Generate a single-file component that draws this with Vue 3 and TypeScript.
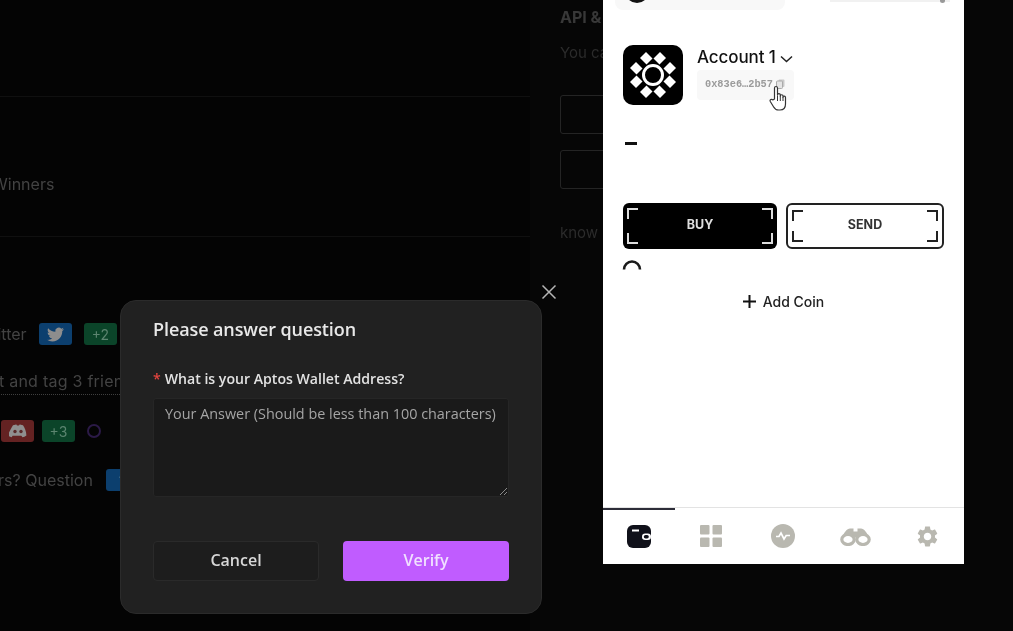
<script setup lang="ts">
const corners = ['tl', 'tr', 'bl', 'br']
const arms = [
  [26.5, 16.5, 20, 10], [33.5, 16.5, 40, 10], [16.5, 26.5, 10, 20], [43.5, 26.5, 50, 20],
  [16.5, 33.5, 10, 40], [43.5, 33.5, 50, 40], [26.5, 43.5, 20, 50], [33.5, 43.5, 40, 50],
]
</script>

<template>
  <div class="stage">
    <section class="page-left">
      <div class="rule first"></div>
      <div class="row winners"><span class="clip-w">Winners</span></div>
      <div class="rule second"></div>
      <div class="row tw">
        <span class="clip-a">Twitter</span>
        <span class="chip blue">
          <svg width="17" height="17" viewBox="0 0 24 24"><path fill="#8d8d8d" d="M23.953 4.57a10 10 0 01-2.825.775 4.958 4.958 0 002.163-2.723c-.951.555-2.005.959-3.127 1.184a4.92 4.92 0 00-8.384 4.482C7.69 8.095 4.067 6.13 1.64 3.162a4.822 4.822 0 00-.666 2.475c0 1.71.87 3.213 2.188 4.096a4.904 4.904 0 01-2.228-.616v.06a4.923 4.923 0 003.946 4.827 4.996 4.996 0 01-2.212.085 4.936 4.936 0 004.604 3.417 9.867 9.867 0 01-6.102 2.105c-.39 0-.779-.023-1.17-.067a13.995 13.995 0 007.557 2.209c9.053 0 13.998-7.496 13.998-13.985 0-.21 0-.42-.015-.63A9.935 9.935 0 0024 4.59z"/></svg>
        </span>
        <span class="chip green">+2</span>
      </div>
      <div class="row tag"><span class="clip-b">Post and tag 3 friends</span></div>
      <div class="row dc">
        <span class="chip red">
          <svg width="18" height="14" viewBox="0 0 18 14"><path fill="#8f8f8f" d="M4 1.2C5.5.6 7 .4 7.4.4L8 1.4h2l.6-1c.4 0 1.9.2 3.4.8 1.6 2.4 3.4 6 3.4 10.2-1.2 1-2.6 1.6-4 1.9l-1-1.6-8.8 0-1 1.6c-1.4-.3-2.8-.9-4-1.9C.6 7.2 2.4 3.6 4 1.2z"/><circle cx="6" cy="7.5" r="1.7" fill="#5a2a2a"/><circle cx="12" cy="7.5" r="1.7" fill="#5a2a2a"/></svg>
        </span>
        <span class="chip green">+3</span>
        <span class="ring"></span>
      </div>
      <div class="row qa">
        <span class="clip-c">Answers? Question</span>
        <span class="chip blue">?</span>
      </div>
    </section>

    <section class="page-right">
      <h2 class="api">API &amp; Keys</h2>
      <p class="hint">You can connect</p>
      <div class="ghost-input"></div>
      <div class="ghost-input"></div>
      <p class="know">know more</p>
    </section>

    <div class="modal">
      <h3>Please answer question</h3>
      <label class="q"><span class="star">*</span>What is your Aptos Wallet Address?</label>
      <div class="area">
        <span>Your Answer (Should be less than 100 characters)</span>
        <svg class="grip" width="9" height="9" viewBox="0 0 9 9"><path d="M1 8 8 1M5 8 8 5" stroke="#8a8a8a" stroke-width="1" fill="none"/></svg>
      </div>
      <div class="actions">
        <button class="cancel">Cancel</button>
        <button class="verify">Verify</button>
      </div>
    </div>

    <svg class="close" width="16" height="16" viewBox="0 0 16 16"><path d="M1.5 1.5 14.5 14.5M14.5 1.5 1.5 14.5" stroke="#b5b5b5" stroke-width="1.5" fill="none"/></svg>

    <aside class="wallet">
      <div class="topbar">
        <div class="pill-left"><span class="dot"></span></div>
        <div class="pill-right"><span class="tick"></span></div>
      </div>

      <div class="account">
        <svg class="avatar" width="60" height="60" viewBox="0 0 60 60">
          <rect width="60" height="60" rx="10" fill="#000"/>
          <line v-for="(a, i) in arms" :key="i" :x1="a[0]" :y1="a[1]" :x2="a[2]" :y2="a[3]" stroke="#fff" stroke-width="8.5"/>
          <circle cx="30" cy="30" r="9.5" fill="none" stroke="#fff" stroke-width="3"/>
        </svg>
        <div class="acc-text">
          <div class="acc-name">Account 1
            <svg width="13" height="8" viewBox="0 0 13 8"><path d="M1 1.5 6.5 6.5 12 1.5" stroke="#222" stroke-width="1.5" fill="none"/></svg>
          </div>
          <div class="addr">
            <span>0x83e6…2b57</span>
            <svg width="9" height="10" viewBox="0 0 9 10"><rect x="2.5" y=".5" width="6" height="7.5" rx="1" fill="#c9c9c9"/><rect x=".5" y="2" width="6" height="7.5" rx="1" fill="#e4e4e4" stroke="#aaa"/></svg>
          </div>
        </div>
      </div>

      <div class="dash"></div>

      <div class="btns">
        <button class="act buy"><i v-for="c in corners" :key="c" :class="['cn', c]"></i>BUY</button>
        <button class="act send"><i v-for="c in corners" :key="c" :class="['cn', c]"></i>SEND</button>
      </div>

      <svg class="spin" width="20" height="12" viewBox="0 0 20 12"><path d="M2 10.5A8 8 0 0 1 18 10.5" fill="none" stroke="#1a1a1a" stroke-width="2.6"/></svg>

      <div class="add">
        <svg width="13" height="13" viewBox="0 0 13 13"><path d="M6.5 0v13M0 6.5h13" stroke="#111" stroke-width="2"/></svg>
        <span>Add Coin</span>
      </div>

      <nav class="tabs">
        <div class="tab active">
          <svg width="24" height="23" viewBox="0 0 24 23"><rect width="24" height="23" rx="6" fill="#10111a"/><path d="M5 5.5h7" stroke="#fff" stroke-width="2"/><rect x="15" y="8.5" width="9" height="6.5" rx="3.2" fill="#fff"/><rect x="16.8" y="10" width="5" height="3.5" rx="1.7" fill="#10111a"/></svg>
        </div>
        <div class="tab">
          <svg width="22" height="22" viewBox="0 0 22 22" fill="#b9b8b0"><rect width="9.5" height="9.5" rx="1"/><rect x="12.5" width="9.5" height="9.5" rx="1"/><rect y="12.5" width="9.5" height="9.5" rx="1"/><rect x="12.5" y="12.5" width="9.5" height="9.5" rx="1"/></svg>
        </div>
        <div class="tab">
          <svg width="24" height="24" viewBox="0 0 24 24"><circle cx="12" cy="12" r="12" fill="#b9b8b0"/><path d="M5 12.5h3l2-3.5 3 6 2.2-3.5H19" stroke="#fff" stroke-width="1.7" fill="none"/></svg>
        </div>
        <div class="tab">
          <svg width="31" height="19" viewBox="0 0 31 19"><path d="M10 1.5h3.5v3h4v-3H21c3 0 6 4 8 9H2c2-5 5-9 8-9z" fill="#b9b8b0"/><ellipse cx="8" cy="12.5" rx="6.2" ry="5" fill="#fff" stroke="#b9b8b0" stroke-width="3.2"/><ellipse cx="23" cy="12.5" rx="6.2" ry="5" fill="#fff" stroke="#b9b8b0" stroke-width="3.2"/></svg>
        </div>
        <div class="tab">
          <svg width="25" height="25" viewBox="0 0 24 24"><path fill="#b9b8b0" d="M19.14 12.94c.04-.3.06-.61.06-.94 0-.32-.02-.64-.07-.94l2.03-1.58c.18-.14.23-.41.12-.61l-1.92-3.32c-.12-.22-.37-.29-.59-.22l-2.39.96c-.5-.38-1.03-.7-1.62-.94l-.36-2.54c-.04-.24-.24-.41-.48-.41h-3.84c-.24 0-.43.17-.47.41l-.36 2.54c-.59.24-1.13.57-1.62.94l-2.39-.96c-.22-.08-.47 0-.59.22L2.74 8.87c-.12.21-.08.47.12.61l2.03 1.58c-.05.3-.09.63-.09.94s.02.64.07.94l-2.03 1.58c-.18.14-.23.41-.12.61l1.92 3.32c.12.22.37.29.59.22l2.39-.96c.5.38 1.03.7 1.62.94l.36 2.54c.05.24.24.41.48.41h3.84c.24 0 .44-.17.47-.41l.36-2.54c.59-.24 1.13-.56 1.62-.94l2.39.96c.22.08.47 0 .59-.22l1.92-3.32c.12-.22.07-.47-.12-.61l-2.01-1.58zM12 15.6c-1.98 0-3.6-1.62-3.6-3.6s1.62-3.6 3.6-3.6 3.6 1.62 3.6 3.6-1.62 3.6-3.6 3.6z"/></svg>
        </div>
      </nav>
    </aside>

    <svg class="hand" width="18" height="26" viewBox="0 0 18 26">
      <path d="M5.5 14V3c0-2 3-2 3 0v7c0-1.8 2.8-1.8 2.8 0v1c0-1.7 2.7-1.7 2.7 0v1.2c0-1.5 2.5-1.5 2.5.2V19c0 3.5-2 6-5.5 6H9.5c-2.5 0-3.8-1.2-5-3.3L1.3 16.5c-.9-1.7 1.3-3 2.5-1.5z" fill="#fff" stroke="#333" stroke-width="1.2" stroke-linejoin="round"/>
      <path d="M8.5 10.500V16M11.300 11V16M14 12V16" stroke="#333" stroke-width="1" fill="none"/>
    </svg>
  </div>
</template>

<style>
html, body { margin: 0; background: #000; }
</style>

<style scoped>
.stage {
  position: relative;
  width: 1013px;
  height: 631px;
  overflow: hidden;
  display: flex;
  background: #000;
  font-family: "Open Sans", "Liberation Sans", sans-serif;
  filter: blur(.45px);
}
.page-left {
  width: 530px;
  height: 631px;
  flex: none;
  overflow: hidden;
  background: #040404;
  padding-top: 96px;
  box-sizing: border-box;
  color: #434343;
  font-family: Inter, "Liberation Sans", sans-serif;
  font-size: 16px;
}
.rule { height: 1px; background: #101010; }
.rule.second { margin-top: 41px; }
.row { display: flex; align-items: center; height: 22px; white-space: nowrap; }
.winners { margin-top: 76px; }
.clip-w { margin-left: -8px; }
.tw { margin-top: 86px; }
.clip-a { margin-left: -25px; width: 64px; flex: none; }
.chip {
  width: 33px;
  height: 22px;
  flex: none;
  border-radius: 3px;
  display: flex;
  align-items: center;
  justify-content: center;
  font-size: 14px;
}
.blue { background: #0c3f6e; color: #8aa; }
.green { background: #0b4429; color: #5c8570; margin-left: 12px; }
.red { background: #642222; margin-left: 1px; }
.tag { margin-top: 24px; height: 26px; }
.tag .clip-b {
  margin-left: -30px;
  border-bottom: 1px dotted #3f3f3f;
  line-height: 25px;
  width: 180px;
  overflow: hidden;
  letter-spacing: .25px;
}
.dc { margin-top: 25px; }
.dc .green { margin-left: 8px; }
.ring {
  width: 10px;
  height: 10px;
  margin-left: 12px;
  border: 2px solid #2b1a47;
  border-radius: 50%;
}
.qa { margin-top: 26px; height: 24px; }
.clip-c { margin-left: -53px; width: 159px; flex: none; }
.page-right {
  flex: 1;
  height: 631px;
  padding: 6px 0 0 30px;
  box-sizing: border-box;
  overflow: hidden;
  background: #060606;
  color: #333;
  font-family: Inter, "Liberation Sans", sans-serif;
  white-space: nowrap;
}
.api { margin: 0; font-size: 16px; line-height: 22px; color: #383838; }
.hint { margin: 15px 0 32px; font-size: 15px; line-height: 20px; color: #2b2b2b; }
.ghost-input {
  width: 200px;
  height: 37px;
  border: 1px solid #242424;
  border-radius: 3px;
  margin-bottom: 16px;
}
.know { margin: 34px 0 0; font-size: 15px; line-height: 20px; color: #2b2b2b; }

.modal {
  position: absolute;
  left: 120px;
  top: 300px;
  width: 422px;
  height: 314px;
  box-sizing: border-box;
  padding: 16px 32px 0;
  background: #212121;
  border: 1px solid #2b2b2b;
  border-radius: 16px;
  color: #e6e6e6;
}
.modal h3 { margin: 0; font-size: 18px; line-height: 24px; font-weight: 600; color: #e8e8e8; letter-spacing: -.1px; }
.q {
  display: block;
  margin-top: 28px;
  font-size: 14.1px;
  line-height: 20px;
  font-weight: 600;
  color: #e2e2e2;
}
.star { color: #e5453f; margin-right: 4px; }
.area {
  position: relative;
  margin-top: 9px;
  height: 99px;
  box-sizing: border-box;
  padding: 5px 11px;
  background: #1a1a1a;
  border: 1px solid #262626;
  border-radius: 3px;
  font-size: 14.4px;
  line-height: 20px;
  color: #a5a5a5;
  white-space: nowrap;
}
.grip { position: absolute; right: 0; bottom: 0; }
.actions { display: flex; justify-content: space-between; margin-top: 44px; width: 356px; }
.actions button {
  width: 166px;
  height: 40px;
  padding: 0 0 2px;
  border-radius: 4px;
  font: 600 16px "Open Sans", "Liberation Sans", sans-serif;
}
.cancel { background: #1d1d1d; border: 1px solid #2a2a2a; color: #d8d8d8; }
.verify { background: #c05cff; border: 0; color: #f0e0ff; }
.close { position: absolute; left: 541px; top: 284px; }

.wallet {
  position: absolute;
  left: 603px;
  top: 0;
  width: 361px;
  height: 564px;
  background: #fff;
  display: flex;
  flex-direction: column;
  font-family: Inter, "Liberation Sans", sans-serif;
  color: #111;
}
.topbar { display: flex; justify-content: space-between; height: 9px; padding: 0 14px 0 12px; }
.pill-left {
  width: 170px;
  height: 10px;
  background: #f8f8f8;
  border-radius: 0 0 8px 8px;
  overflow: hidden;
}
.dot {
  display: block;
  width: 24px;
  height: 24px;
  margin: -21px 0 0 10px;
  background: #111;
  border-radius: 50%;
}
.pill-right {
  width: 120px;
  height: 2px;
  background: #f1f1f1;
  display: flex;
  justify-content: flex-end;
}
.tick { width: 5px; height: 3px; background: #999; border-radius: 0 0 3px 3px; margin-right: 5px; }
.account { display: flex; gap: 14px; padding: 36px 0 0 20px; }
.avatar { flex: none; display: block; }
.acc-text { display: flex; flex-direction: column; align-items: flex-start; margin-top: 1px; }
.acc-name {
  display: flex;
  align-items: center;
  gap: 4px;
  font-size: 17px;
  line-height: 22px;
  font-weight: 500;
  white-space: nowrap;
  letter-spacing: -.1px;
}
.acc-name svg { margin-top: 3px; }
.addr {
  display: flex;
  align-items: center;
  gap: 3px;
  height: 30px;
  margin-top: 2px;
  padding: 0 9px 2px 8px;
  box-sizing: border-box;
  background: #f8f8f8;
  border-radius: 4px;
  font: 700 10.3px "Liberation Mono", monospace;
  color: #9b9b9b;
}
.dash { width: 12px; height: 3px; margin: 37px 0 0 22px; background: #111; }
.btns { display: flex; gap: 9px; padding: 58px 20px 0; }
.act {
  position: relative;
  height: 46px;
  border-radius: 6px;
  font: 700 12.5px Inter, "Liberation Sans", sans-serif;
  padding: 0 0 4px;
}
.buy { width: 154px; background: #000; border: 0; color: #ddd; }
.send { width: 158px; background: #fff; border: 2px solid #222; color: #333; }
.cn { position: absolute; width: 9px; height: 9px; border: 0 solid #ddd; }
.send .cn { border-color: #222; }
.cn.tl { left: 4px; top: 5px; border-width: 2px 0 0 2px; }
.cn.tr { right: 4px; top: 5px; border-width: 2px 2px 0 0; }
.cn.bl { left: 4px; bottom: 5px; border-width: 0 0 2px 2px; }
.cn.br { right: 4px; bottom: 5px; border-width: 0 2px 2px 0; }
.spin { display: block; margin: 10px 0 0 19px; }
.add {
  display: flex;
  align-items: center;
  justify-content: center;
  gap: 7px;
  margin-top: 19px;
  height: 22px;
  font-size: 14px;
  font-weight: 500;
  color: #222;
}
.tabs {
  margin-top: auto;
  height: 56px;
  display: flex;
  border-top: 1px solid #e3e3e3;
}
.tab {
  position: relative;
  width: 72.2px;
  flex: none;
  display: flex;
  align-items: center;
  justify-content: center;
}
.tab.active::before {
  content: "";
  position: absolute;
  left: 0;
  right: 0;
  top: 0;
  height: 2px;
  background: #2d2d38;
}
.hand { position: absolute; left: 769px; top: 85px; }
</style>
